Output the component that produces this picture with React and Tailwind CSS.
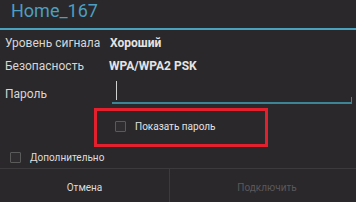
export default function App() {
  return (
    <div
      className="flex h-[202px] w-[356px] flex-col overflow-hidden bg-[#2a282b] text-[#d6d6d6]"
      style={{ fontFamily: "Roboto, 'Noto Sans', sans-serif" }}
    >
      {/* Title */}
      <div className="h-[28px] pl-[11px]">
        <div className="text-[18px] leading-[21px] text-[#4c9fc0]">Home_167</div>
      </div>
      <div className="h-[2px] bg-[#4aa3be]" />

      {/* Info rows */}
      <div className="flex h-[26px] items-end pb-[5px] pl-[5px] text-[12px] leading-[16px]">
        <span className="w-[105px]">Уровень сигнала</span>
        <span className="font-bold text-[#e4e4e4]">Хороший</span>
      </div>
      <div className="flex h-[23px] items-end pb-[5px] pl-[5px] text-[12px] leading-[16px]">
        <span className="w-[104px]">Безопасность</span>
        <span className="font-bold text-[#e4e4e4]">WPA/WPA2 PSK</span>
      </div>

      {/* Password */}
      <div className="flex h-[25px] pl-[5px] text-[12px] leading-[16px]">
        <span className="w-[107px] pt-[7px]">Пароль</span>
        <div className="relative mr-[4px] flex-1 border-b-[2px] border-[#3b8596]">
          <div className="absolute left-[4px] top-[2px] h-[19px] w-[1px] bg-[#cfcfcf]" />
          <div className="absolute bottom-0 right-0 h-[5px] w-[1px] bg-[#3b8596]" />
        </div>
      </div>

      {/* Show password, highlighted */}
      <div className="flex pl-[94px] pt-[4px]">
        <div className="flex h-[39px] w-[174px] items-center border-[3px] border-[#e3202d] pl-[18px]">
          <div className="-mt-[2px] h-[11px] w-[11px] rounded-[1px] border border-[#5a5a5a] bg-[#2f2d30]" />
          <span className="-mt-[2px] ml-[9px] text-[10px] leading-[14px] text-[#e2e2e2]">Показать пароль</span>
        </div>
      </div>

      {/* Advanced */}
      <div className="flex h-[20px] items-center pl-[10px] pt-[1px]">
        <div className="h-[11px] w-[11px] rounded-[1px] border border-[#5a5a5a] bg-[#2f2d30]" />
        <span className="ml-[9px] text-[10px] leading-[14px] text-[#dedede]">Дополнительно</span>
      </div>

      {/* Buttons */}
      <div className="mt-auto flex h-[34px] border-t border-[#3c3a3d] pt-[4px]">
        <div className="-mt-[4px] flex w-[170px] items-center justify-center border-r border-[#3c3a3d] pt-[4px] text-[10px] text-[#dcdcdc]">
          Отмена
        </div>
        <div className="flex flex-1 items-center justify-center pl-[8px] text-[10px] text-[#5a585b]">
          Подключить
        </div>
      </div>
    </div>
  );
}
